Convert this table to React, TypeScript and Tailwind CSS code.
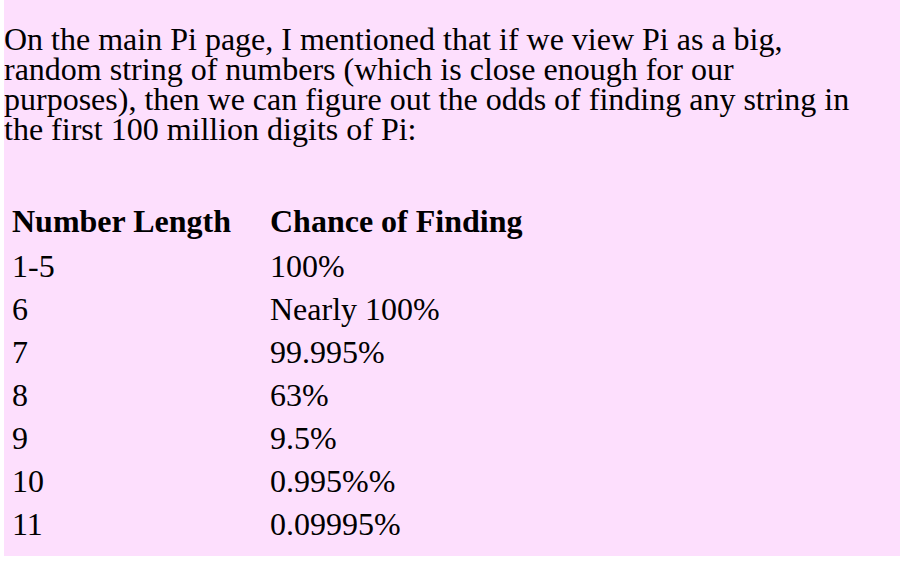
import React from "react";

const rows: [string, string][] = [
  ["1-5", "100%"],
  ["6", "Nearly 100%"],
  ["7", "99.995%"],
  ["8", "63%"],
  ["9", "9.5%"],
  ["10", "0.995%%"],
  ["11", "0.09995%"],
];

export default function App() {
  return (
    <div className="w-[900px] h-[576px] bg-white overflow-hidden">
      <div
        className="ml-[4px] bg-[#fddffd] text-black text-[32px] leading-[30px] pt-[24px] pb-[10px]"
        style={{ fontFamily: '"Liberation Serif", "Times New Roman", serif' }}
      >
        <p className="w-[852px]">
          On the main Pi page, I mentioned that if we view Pi as a big, random string of numbers (which is close
          enough for our purposes), then we can figure out the odds of finding any string in the first 100 million
          digits of Pi:
        </p>
        <table className="mt-[54px] border-separate border-spacing-[2px]">
          <thead>
            <tr>
              <th className="w-[256px] px-[6px] pt-[6px] pb-[7px] text-left font-bold">Number Length</th>
              <th className="px-[6px] pt-[6px] pb-[7px] text-left font-bold">Chance of Finding</th>
            </tr>
          </thead>
          <tbody>
            {rows.map(([a, b]) => (
              <tr key={a}>
                <td className="px-[6px] pt-[6px] pb-[5px]">{a}</td>
                <td className="px-[6px] pt-[6px] pb-[5px]">{b}</td>
              </tr>
            ))}
          </tbody>
        </table>
      </div>
    </div>
  );
}
